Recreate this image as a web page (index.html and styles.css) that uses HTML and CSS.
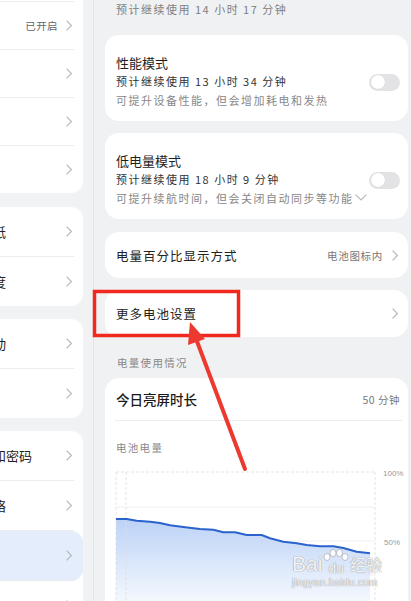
FILE: index.html
```html
<!DOCTYPE html>
<html lang="zh-CN">
<head>
    <meta charset="UTF-8">
    <meta name="viewport" content="width=device-width, initial-scale=1.0">
    <title>电池</title>
    <link rel="stylesheet" href="styles.css">
</head>
<body>
<div class="screen">
    <aside class="side">
        <div class="side-inner">
            <div class="lcard lcard-tight">
                <div class="lrow"><span class="lname">通知与状态栏</span><svg class="chev" viewBox="0 0 6 11"><polyline points="0.6,0.6 5.4,5.5 0.6,10.4"/></svg></div>
                <div class="lrow"><span class="lname">应用分身</span><span class="lval">已开启</span><svg class="chev" viewBox="0 0 6 11"><polyline points="0.6,0.6 5.4,5.5 0.6,10.4"/></svg></div>
                <div class="lrow"><span class="lname">应用管理</span><svg class="chev" viewBox="0 0 6 11"><polyline points="0.6,0.6 5.4,5.5 0.6,10.4"/></svg></div>
                <div class="lrow"><span class="lname">默认应用</span><svg class="chev" viewBox="0 0 6 11"><polyline points="0.6,0.6 5.4,5.5 0.6,10.4"/></svg></div>
                <div class="lrow"><span class="lname">权限管理</span><svg class="chev" viewBox="0 0 6 11"><polyline points="0.6,0.6 5.4,5.5 0.6,10.4"/></svg></div>
            </div>

            <div class="lcard">
                <div class="lrow"><span class="lname">桌面与壁纸</span><svg class="chev" viewBox="0 0 6 11"><polyline points="0.6,0.6 5.4,5.5 0.6,10.4"/></svg></div>
                <div class="lrow"><span class="lname">显示与亮度</span><svg class="chev" viewBox="0 0 6 11"><polyline points="0.6,0.6 5.4,5.5 0.6,10.4"/></svg></div>
            </div>

            <div class="lcard">
                <div class="lrow"><span class="lname">声音与振动</span><svg class="chev" viewBox="0 0 6 11"><polyline points="0.6,0.6 5.4,5.5 0.6,10.4"/></svg></div>
                <div class="lrow"><span class="lname">免打扰</span><svg class="chev" viewBox="0 0 6 11"><polyline points="0.6,0.6 5.4,5.5 0.6,10.4"/></svg></div>
            </div>

            <div class="lcard">
                <div class="lrow"><span class="lname">指纹面部和密码</span><svg class="chev" viewBox="0 0 6 11"><polyline points="0.6,0.6 5.4,5.5 0.6,10.4"/></svg></div>
                <div class="lrow"><span class="lname">移动与网络</span><svg class="chev" viewBox="0 0 6 11"><polyline points="0.6,0.6 5.4,5.5 0.6,10.4"/></svg></div>
                <div class="lrow active"><span class="lname">电池</span><svg class="chev" viewBox="0 0 6 11"><polyline points="0.6,0.6 5.4,5.5 0.6,10.4"/></svg></div>
                <div class="lrow"><span class="lname">隐私</span><svg class="chev" viewBox="0 0 6 11"><polyline points="0.6,0.6 5.4,5.5 0.6,10.4"/></svg></div>
            </div>
        </div>
    </aside>

    <main class="main">
        <p class="top-note">预计继续使用 14 小时 17 分钟</p>

        <div class="card mode-card">
            <div class="mode-text">
                <div class="title">性能模式</div>
                <div class="sub">预计继续使用 13 小时 34 分钟</div>
                <div class="desc">可提升设备性能，但会增加耗电和发热</div>
            </div>
            <span class="toggle"></span>
        </div>

        <div class="card mode-card">
            <div class="mode-text">
                <div class="title">低电量模式</div>
                <div class="sub">预计继续使用 18 小时 9 分钟</div>
                <div class="desc">可提升续航时间，但会关闭自动同步等功能<svg class="down" viewBox="0 0 12 7"><polyline points="0.6,0.6 6,6 11.4,0.6"/></svg></div>
            </div>
            <span class="toggle"></span>
        </div>

        <div class="card link-card">
            <span class="link-name">电量百分比显示方式</span>
            <span class="link-val">电池图标内</span>
            <svg class="chev" viewBox="0 0 6 11"><polyline points="0.6,0.6 5.4,5.5 0.6,10.4"/></svg>
        </div>

        <div class="card link-card more">
            <span class="link-name">更多电池设置</span>
            <svg class="chev" viewBox="0 0 6 11"><polyline points="0.6,0.6 5.4,5.5 0.6,10.4"/></svg>
        </div>

        <div class="section-label">电量使用情况</div>

        <div class="card usage-card">
            <div class="usage-head">
                <span class="usage-title">今日亮屏时长</span>
                <span class="usage-val">50 分钟</span>
            </div>
            <div class="chart-label">电池电量</div>
            <svg class="chart" viewBox="0 0 303 130" width="303" height="130">
                <defs>
                    <linearGradient id="fill" x1="0" y1="0" x2="0" y2="1">
                        <stop offset="0" stop-color="#bcd2f6"/>
                        <stop offset="1" stop-color="#f4f8fe"/>
                    </linearGradient>
                </defs>
                <line class="grid-dash" x1="11" y1="1" x2="270" y2="1"/>
                <line class="grid" x1="11" y1="36" x2="270" y2="36"/>
                <line class="grid" x1="11" y1="70" x2="270" y2="70"/>
                <line class="grid" x1="11" y1="104" x2="270" y2="104"/>
                <polygon fill="url(#fill)" points="11,48 21.7,48 31.7,49.7 45,50.7 55,52 65,54.3 78.3,56 95,58 108.3,58.7 118.3,61.3 130,61.3 141.7,64 156.7,64 165,67.3 178.3,70.7 191.7,72.3 201.7,74 215,75.3 228.3,75.3 238.3,77 251.7,80.7 265,82.3 265,130 11,130"/>
                <line class="grid-dash" x1="11" y1="1" x2="11" y2="130"/>
                <line class="grid-dash" x1="21" y1="1" x2="21" y2="130"/>
                <line class="grid-dash" x1="270" y1="1" x2="270" y2="130"/>
                <polyline class="level" points="11,48 21.7,48 31.7,49.7 45,50.7 55,52 65,54.3 78.3,56 95,58 108.3,58.7 118.3,61.3 130,61.3 141.7,64 156.7,64 165,67.3 178.3,70.7 191.7,72.3 201.7,74 215,75.3 228.3,75.3 238.3,77 251.7,80.7 265,82.3"/>
                <text class="axis" x="278" y="5">100%</text>
                <text class="axis" x="279" y="74">50%</text>
            </svg>
        </div>
    </main>

    <svg class="marks" viewBox="0 0 411 601" width="411" height="601">
        <rect x="94.5" y="291.5" width="144" height="44" fill="none" stroke="#f0281e" stroke-width="3.5"/>
        <line x1="245" y1="469" x2="195" y2="336" stroke="#ec3a30" stroke-width="4" stroke-linecap="round"/>
        <polygon points="190,322 205,339 188,345" fill="#ec3a30"/>
    </svg>

    <div class="watermark">
        <div class="wm-logo">
            <span class="wm-bai">Bai</span>
            <span class="wm-paw">
                <svg viewBox="0 0 26 12" width="26" height="12">
                    <ellipse cx="4" cy="8" rx="3" ry="3.5"/>
                    <ellipse cx="10" cy="4" rx="3" ry="3.6"/>
                    <ellipse cx="16.5" cy="4" rx="3" ry="3.6"/>
                    <ellipse cx="22" cy="8" rx="3" ry="3.5"/>
                </svg>
                <span class="wm-du">du</span>
            </span>
            <span class="wm-jy">经验</span>
        </div>
        <div class="wm-url">jingyan.baidu.com</div>
    </div>
</div>
</body>
</html>
```

FILE: styles.css
```css
body {
    margin: 0;
    padding: 0;
    font-family: "Noto Sans CJK SC", "Noto Sans", sans-serif;
    background-color: #f0f1f3;
}

.screen {
    position: relative;
    display: flex;
    width: 411px;
    height: 601px;
    overflow: hidden;
    background-color: #f0f1f3;
}

/* левая колонка настроек (обрезана) */
.side {
    width: 93px;
    flex-shrink: 0;
    border-right: 1px solid #e3e4e7;
    overflow: hidden;
    background-color: #f1f2f4;
}

.side-inner {
    width: 155px;
    margin-left: -72px;
    margin-top: -46px;
}

.lcard {
    background-color: #fff;
    border-radius: 12px;
    margin-bottom: 13px;
}

.lcard-tight {
    margin-bottom: 14px;
}

.lrow {
    display: flex;
    align-items: center;
    height: 49px;
    margin-right: 9px;
    padding-left: 13px;
    border-bottom: 1px solid #ececee;
    white-space: nowrap;
}

.lcard-tight .lrow {
    height: 47px;
}

.lrow:last-child {
    border-bottom: none;
}

.lrow.active {
    margin-right: 0;
    padding-right: 9px;
    background-color: #e3edfb;
    border-radius: 12px;
}

.lname {
    flex: 1;
    font-size: 13px;
    color: #222;
}

.lval {
    font-size: 10.5px;
    letter-spacing: 0.4px;
    color: #666;
    margin-right: 8px;
}

.chev {
    width: 6px;
    height: 11px;
    flex-shrink: 0;
    margin-right: 2px;
}

.chev polyline,
.down polyline {
    fill: none;
    stroke: #b8b8bb;
    stroke-width: 1.2;
}

/* правая колонка: батарея */
.main {
    flex: 1;
    padding: 0 3px 0 11px;
}

.top-note {
    margin: 0;
    line-height: 18px;
    padding-left: 11px;
    font-size: 11px;
    letter-spacing: 1.5px;
    color: #808080;
}

.card {
    background-color: #fff;
    border-radius: 14px;
    padding: 0 8px 0 11px;
}

.mode-card {
    display: flex;
    align-items: center;
    padding-top: 19px;
    padding-bottom: 11px;
    margin-top: 12px;
}

.top-note + .mode-card {
    margin-top: 17px;
}

.mode-text {
    flex: 1;
}

.title {
    font-size: 13px;
    line-height: 18px;
    color: #1f1f1f;
}

.sub {
    font-size: 11px;
    line-height: 19px;
    letter-spacing: 1.5px;
    color: #333;
}

.desc {
    font-size: 11px;
    line-height: 19px;
    letter-spacing: 1.5px;
    color: #888;
    white-space: nowrap;
}

.down {
    width: 12px;
    height: 7px;
    margin-left: 1px;
    vertical-align: 2px;
}

.toggle {
    position: relative;
    width: 31px;
    height: 17px;
    border-radius: 9px;
    background-color: #e3e3e5;
    flex-shrink: 0;
}

.toggle::before {
    content: '';
    position: absolute;
    left: 1.5px;
    top: 1.5px;
    width: 14px;
    height: 14px;
    border-radius: 50%;
    background-color: #fff;
    box-shadow: 0 0 1px rgba(0, 0, 0, 0.15);
}

.link-card {
    display: flex;
    align-items: center;
    height: 46px;
    margin-top: 13px;
}

.link-card.more {
    height: 47px;
    margin-top: 12px;
}

.link-name {
    flex: 1;
    font-size: 12.5px;
    letter-spacing: 1px;
    color: #222;
}

.link-val {
    font-size: 10.5px;
    letter-spacing: 0.7px;
    color: #777;
    margin-right: 9px;
}

.section-label {
    margin-top: 17px;
    line-height: 18px;
    padding-left: 12px;
    font-size: 10.5px;
    letter-spacing: 1.3px;
    color: #888;
}

.usage-card {
    margin-top: 6px;
    padding: 0;
    height: 240px;
}

.usage-head {
    display: flex;
    align-items: center;
    height: 42px;
    margin: 0 6px 0 10px;
    padding-left: 1px;
    border-bottom: 1px solid #ececee;
}

.usage-title {
    flex: 1;
    font-size: 13.5px;
    font-weight: 500;
    color: #1a1a1a;
}

.usage-val {
    font-size: 10.5px;
    letter-spacing: 0.5px;
    color: #777;
    margin-right: 2px;
}

.chart-label {
    margin-top: 18px;
    line-height: 18px;
    padding-left: 11px;
    font-size: 10.5px;
    letter-spacing: 1.3px;
    color: #888;
}

.chart {
    display: block;
    margin-top: 14px;
}

.grid {
    stroke: #f0f0f2;
    stroke-width: 1;
}

.grid-dash {
    stroke: #dcdde0;
    stroke-width: 0.8;
    stroke-dasharray: 3 2;
}

.level {
    fill: none;
    stroke: #2b63cc;
    stroke-width: 2;
    stroke-linejoin: round;
}

.axis {
    font-family: "Liberation Sans", sans-serif;
    font-size: 8px;
    fill: #999;
}

/* пометки поверх скриншота */
.marks {
    position: absolute;
    left: 0;
    top: 0;
    pointer-events: none;
}

.watermark {
    position: absolute;
    left: 292px;
    top: 548px;
    color: rgba(255, 255, 255, 0.9);
    text-shadow: 0 0 1px #9a9a9a, 0 0 1px #9a9a9a;
    font-family: "Liberation Sans", sans-serif;
}

.wm-logo {
    display: flex;
    align-items: flex-end;
    height: 27px;
}

.wm-bai {
    font-size: 21px;
    line-height: 22px;
}

.wm-paw {
    display: flex;
    flex-direction: column;
    align-items: center;
    margin: 0 1px;
}

.wm-paw ellipse {
    fill: rgba(255, 255, 255, 0.9);
    stroke: #a0a0a0;
    stroke-width: 0.6;
}

.wm-du {
    font-size: 14px;
    line-height: 14px;
}

.wm-jy {
    font-family: "Noto Sans CJK SC", sans-serif;
    font-size: 16px;
    line-height: 22px;
}

.wm-url {
    font-size: 10px;
    line-height: 12px;
    margin-top: 2px;
    letter-spacing: 0.3px;
}
```
